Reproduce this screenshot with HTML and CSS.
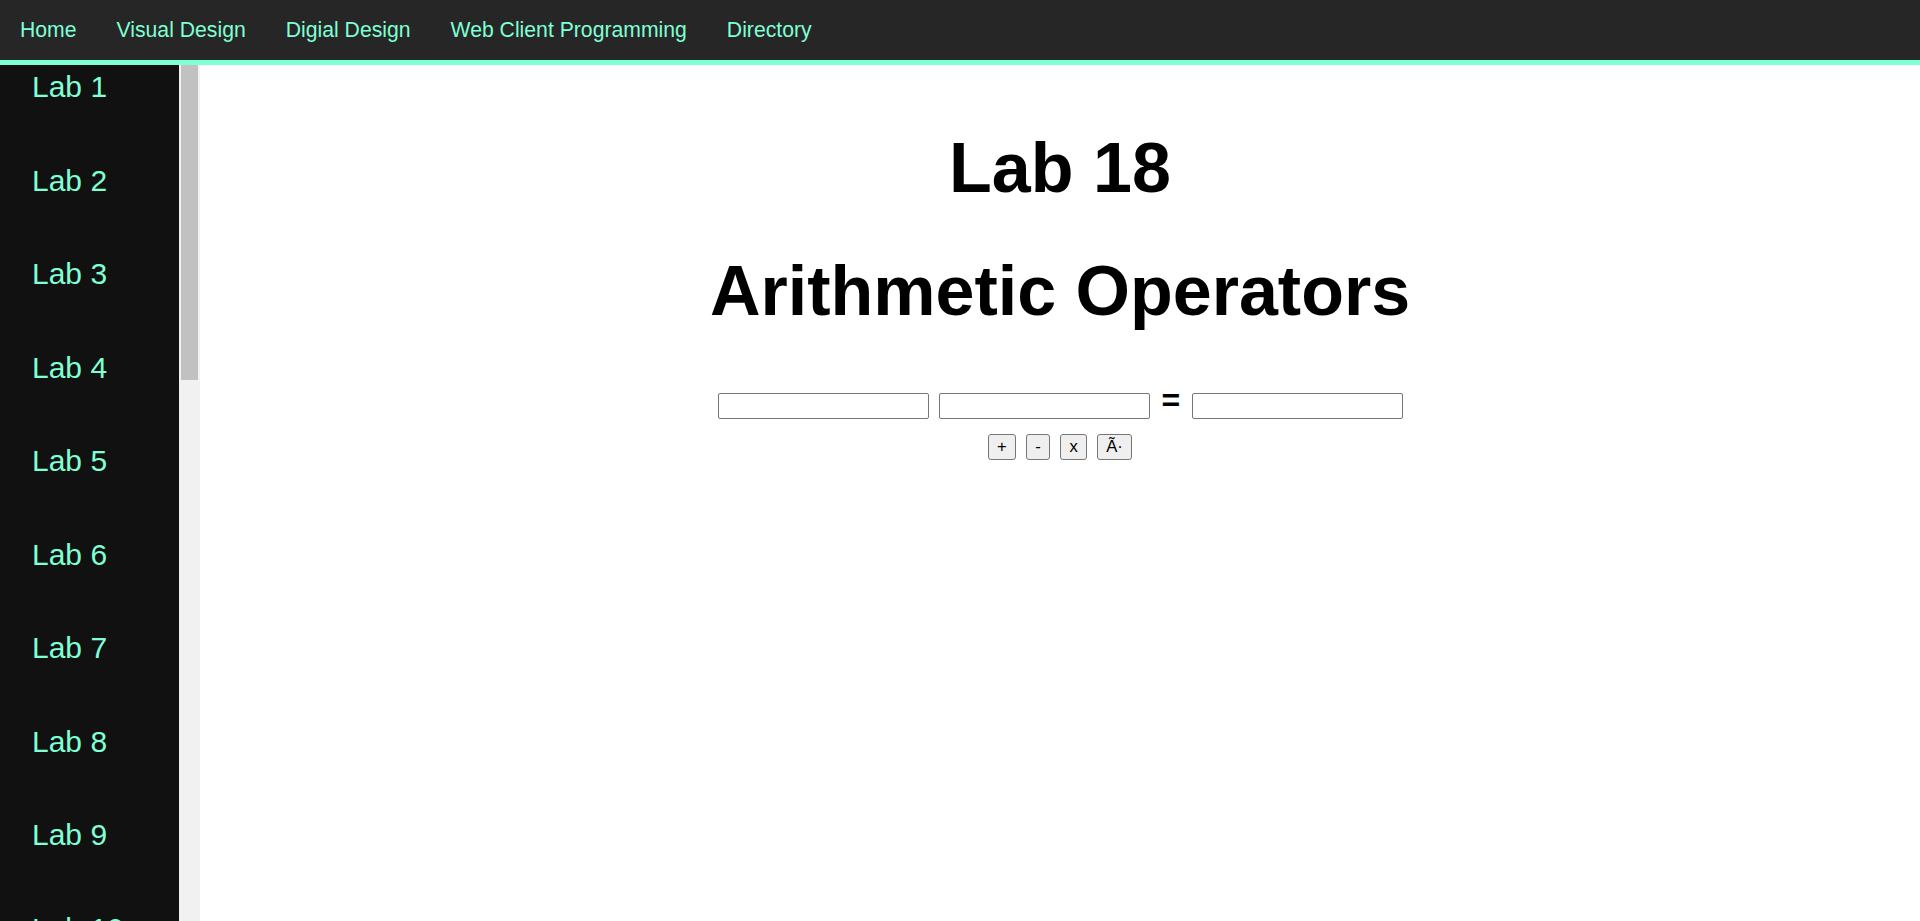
FILE: index.html
```html
<!DOCTYPE html>
<html lang="en">
<head>
<meta charset="utf-8">
<title>Lab 18</title>
<link rel="stylesheet" href="styles.css">
</head>
<body>
<nav class="topnav">
  <a href="#">Home</a>
  <a href="#">Visual Design</a>
  <a href="#">Digial Design</a>
  <a href="#">Web Client Programming</a>
  <a href="#">Directory</a>
</nav>
<div class="layout">
  <aside class="sidebar">
    <div class="sidebar-list">
      <a href="#">Lab 1</a>
      <a href="#">Lab 2</a>
      <a href="#">Lab 3</a>
      <a href="#">Lab 4</a>
      <a href="#">Lab 5</a>
      <a href="#">Lab 6</a>
      <a href="#">Lab 7</a>
      <a href="#">Lab 8</a>
      <a href="#">Lab 9</a>
      <a href="#">Lab 10</a>
      <a href="#">Lab 11</a>
      <a href="#">Lab 12</a>
      <a href="#">Lab 13</a>
      <a href="#">Lab 14</a>
      <a href="#">Lab 15</a>
      <a href="#">Lab 16</a>
      <a href="#">Lab 17</a>
      <a href="#">Lab 18</a>
      <a href="#">Lab 19</a>
      <a href="#">Lab 20</a>
      <a href="#">Lab 21</a>
      <a href="#">Lab 22</a>
      <a href="#">Lab 23</a>
      <a href="#">Lab 24</a>
      <a href="#">Lab 25</a>
    </div>
    <div class="scrollbar"><div class="scroll-thumb"></div></div>
  </aside>
  <main class="content">
    <h1 class="title">Lab 18</h1>
    <h1 class="title">Arithmetic Operators</h1>
    <div class="calc-row">
      <input type="text" class="field">
      <input type="text" class="field">
      <span class="equals">=</span>
      <input type="text" class="field">
    </div>
    <div class="btn-row">
      <button class="op">+</button>
      <button class="op">-</button>
      <button class="op">x</button>
      <button class="op">Ã·</button>
    </div>
  </main>
</div>
</body>
</html>
```
FILE: styles.css
```css
html, body {
  margin: 0;
  padding: 0;
  height: 100%;
  overflow: hidden;
}

body {
  font-family: "Liberation Sans", Arial, sans-serif;
  background: #ffffff;
  display: flex;
  flex-direction: column;
}

.topnav {
  height: 60px;
  flex: 0 0 auto;
  background: #262626;
  border-bottom: 5px solid #7fffd4;
  display: flex;
  align-items: center;
}

.topnav a {
  color: #7fffd4;
  text-decoration: none;
  font-size: 21.2px;
  padding: 0 20px;
}

.layout {
  flex: 1 1 auto;
  display: flex;
  min-height: 0;
}

.sidebar {
  flex: 0 0 200px;
  display: flex;
  min-height: 0;
  overflow: hidden;
}

.sidebar-list {
  flex: 0 0 179px;
  background: #111111;
  overflow: hidden;
}

.sidebar-list a {
  display: block;
  color: #7fffd4;
  text-decoration: none;
  font-size: 30px;
  line-height: 34.5px;
  padding: 5px 0 54px 32px;
}

.scrollbar {
  flex: 0 0 21px;
  box-sizing: border-box;
  padding: 0 2px;
  background: #f1f1f1;
}

.scroll-thumb {
  height: 315px;
  background: #c1c1c1;
}

.content {
  flex: 1 1 auto;
  text-align: center;
  padding-top: 63px;
}

.title {
  margin: 0 0 43px;
  font-size: 70px;
  line-height: 80px;
  font-weight: bold;
  color: #000000;
}

.calc-row {
  display: flex;
  justify-content: center;
  align-items: baseline;
  gap: 10.5px;
  margin-top: 56.3px;
}

.field {
  width: 211px;
  height: 26px;
  box-sizing: border-box;
  border: 1px solid #767676;
  border-radius: 2px;
  padding: 1px 3px;
  font-family: "Liberation Sans", Arial, sans-serif;
  font-size: 16.67px;
  background: #ffffff;
  margin: 0;
}

.equals {
  font-size: 32px;
  font-weight: bold;
  width: 20.5px;
  line-height: 26px;
}

.btn-row {
  display: flex;
  justify-content: center;
  gap: 10.5px;
  margin-top: 14.7px;
}

.op {
  height: 26px;
  box-sizing: border-box;
  padding: 1px 8px;
  border: 1px solid #767676;
  border-radius: 3px;
  background: #efefef;
  color: #000000;
  font-family: "Liberation Sans", Arial, sans-serif;
  font-size: 16.67px;
  margin: 0;
}
```
